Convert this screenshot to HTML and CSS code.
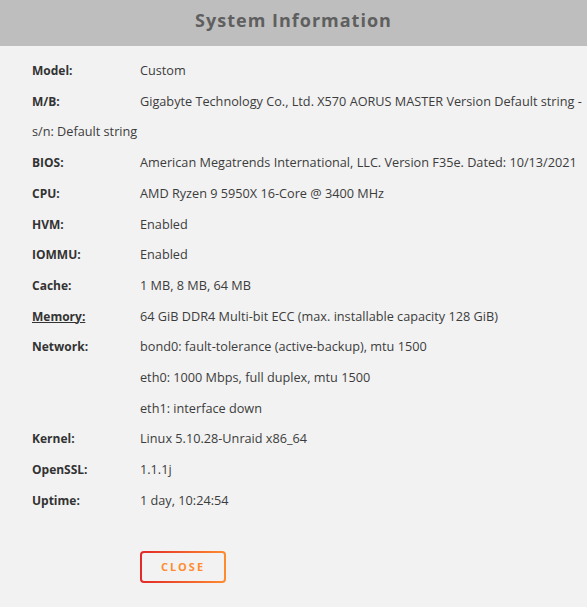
FILE: index.html
```html
<!DOCTYPE html>
<html lang="en">
<head>
  <meta charset="UTF-8">
  <title>System Information</title>
  <link rel="stylesheet" href="styles.css">
</head>
<body>
  <div class="dialog">
    <div class="dialog-title">System Information</div>
    <div class="dialog-body">
      <div class="row"><span class="label">Model:</span>Custom</div>
      <div class="row"><span class="label">M/B:</span>Gigabyte Technology Co., Ltd. X570 AORUS MASTER Version Default string - s/n: Default string</div>
      <div class="row"><span class="label">BIOS:</span>American Megatrends International, LLC. Version F35e. Dated: 10/13/2021</div>
      <div class="row"><span class="label">CPU:</span>AMD Ryzen 9 5950X 16-Core @ 3400 MHz</div>
      <div class="row"><span class="label">HVM:</span>Enabled</div>
      <div class="row"><span class="label">IOMMU:</span>Enabled</div>
      <div class="row"><span class="label">Cache:</span>1 MB, 8 MB, 64 MB</div>
      <div class="row"><span class="label"><a href="#" class="link">Memory:</a></span>64 GiB DDR4 Multi-bit ECC (max. installable capacity 128 GiB)</div>
      <div class="row"><span class="label">Network:</span>bond0: fault-tolerance (active-backup), mtu 1500</div>
      <div class="row indent">eth0: 1000 Mbps, full duplex, mtu 1500</div>
      <div class="row indent">eth1: interface down</div>
      <div class="row"><span class="label">Kernel:</span>Linux 5.10.28-Unraid x86_64</div>
      <div class="row"><span class="label">OpenSSL:</span>1.1.1j</div>
      <div class="row"><span class="label">Uptime:</span>1 day, 10:24:54</div>
      <div class="actions">
        <button class="btn-close">Close</button>
      </div>
    </div>
  </div>
</body>
</html>
```

FILE: styles.css
```css
body {
  font-family: "Open Sans", sans-serif;
  margin: 0;
  padding: 0;
  background-color: #f2f2f2;
  color: #3c3c3c;
}
.dialog {
  position: relative;
  height: 607px;
  overflow: hidden;
}
.dialog-title {
  height: 46px;
  line-height: 40px;
  background: #bebebe;
  text-align: center;
  font-size: 18px;
  font-weight: bold;
  letter-spacing: 1px;
  color: #5f5f5f;
}
.dialog-body {
  padding: 9px 0 0 32px;
  font-size: 12.7px;
}
.row {
  line-height: 30.7px;
}
.label {
  display: inline-block;
  width: 108px;
  font-size: 12px;
  line-height: 1;
  font-weight: bold;
  color: #333;
}
.indent {
  padding-left: 108px;
}
.link {
  color: #333;
  text-decoration: underline;
}
.actions {
  padding: 35px 0 0 108px;
}
.btn-close {
  width: 86px;
  height: 32px;
  border: 2px solid transparent;
  border-radius: 4px;
  background: linear-gradient(#f2f2f2, #f2f2f2) padding-box,
    linear-gradient(90deg, #e22828, #ff8c2f) border-box;
  color: #ff8c2f;
  font-family: "Open Sans", sans-serif;
  font-size: 11px;
  font-weight: bold;
  letter-spacing: 2px;
  text-transform: uppercase;
  cursor: pointer;
}
```
